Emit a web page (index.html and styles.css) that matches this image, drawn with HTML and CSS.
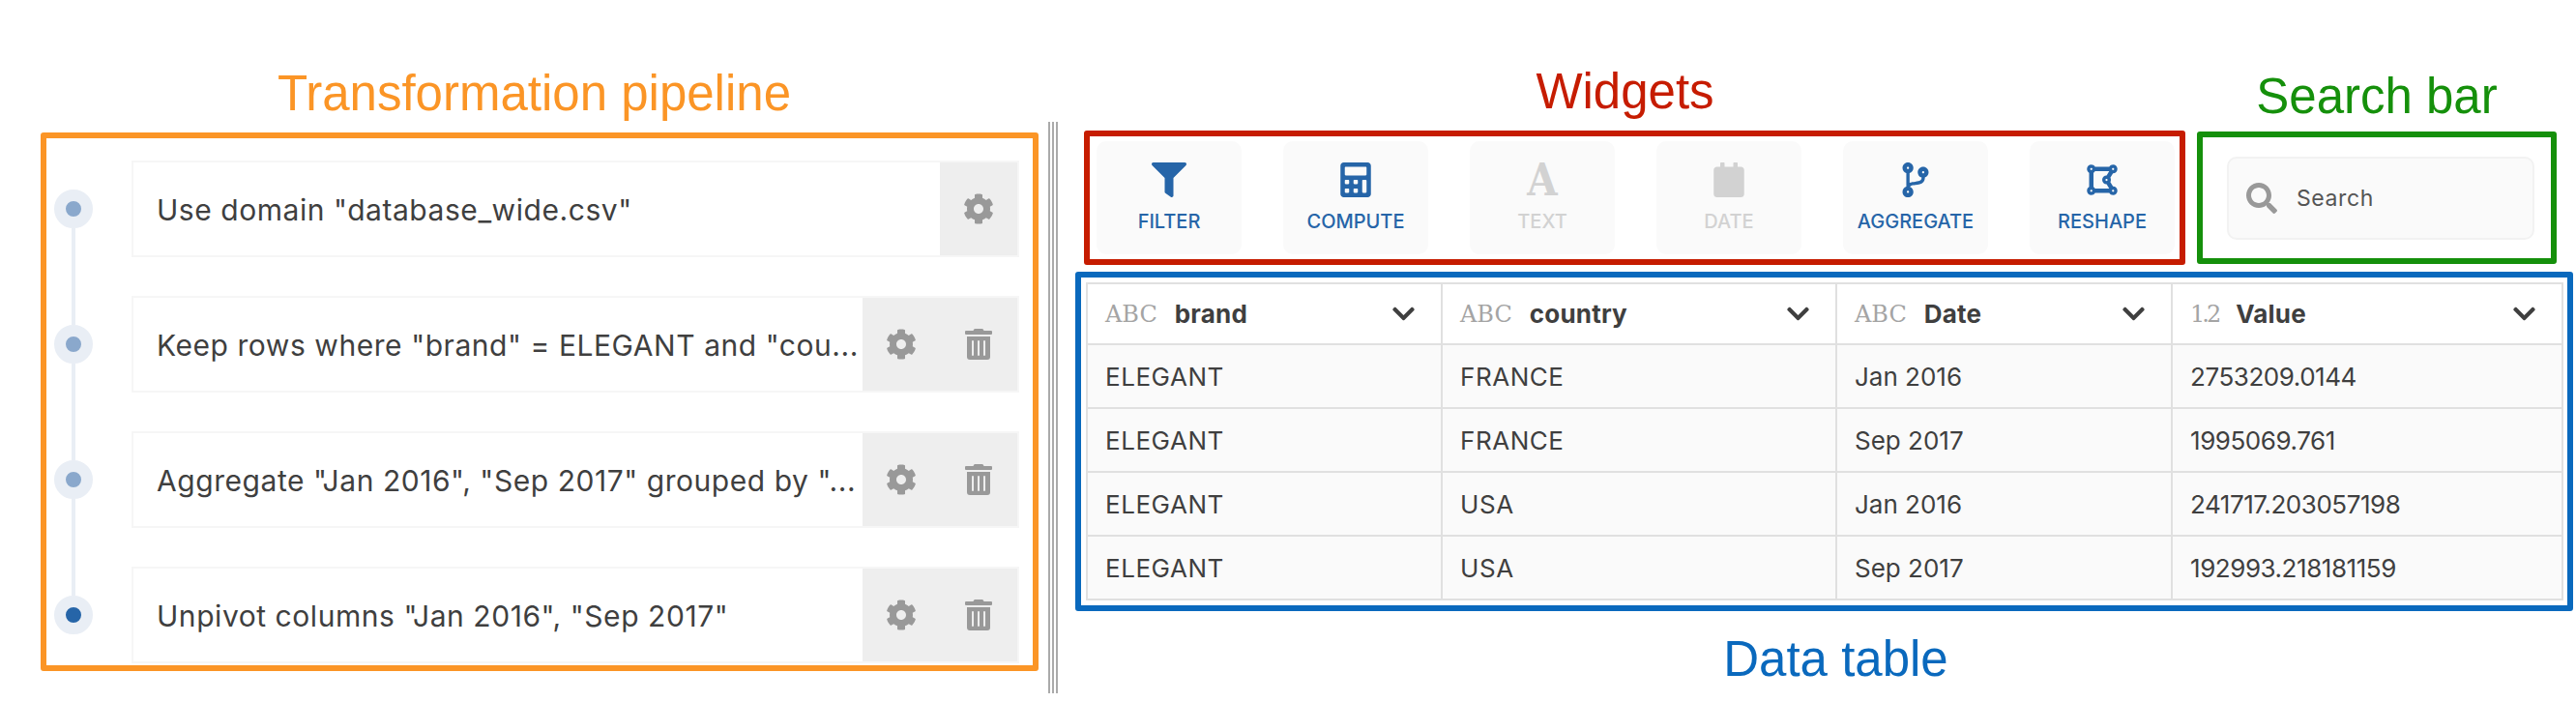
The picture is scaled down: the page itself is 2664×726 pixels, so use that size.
FILE: index.html
```html
<!DOCTYPE html>
<html lang="en">
<head>
    <meta charset="UTF-8">
    <title>Transformation pipeline, widgets and data table</title>
    <link rel="stylesheet" href="styles.css">
</head>
<body>
    <!-- icon sprite -->
    <svg class="sprite" xmlns="http://www.w3.org/2000/svg">
        <symbol id="i-cog" viewBox="0 0 512 512"><path d="M487.4 315.7l-42.6-24.6c4.3-23.2 4.3-47 0-70.2l42.6-24.6c4.9-2.8 7.1-8.6 5.5-14-11.1-35.6-30-67.8-54.7-94.6-3.8-4.1-10-5.1-14.8-2.3L380.8 110c-17.9-15.4-38.5-27.3-60.8-35.1V25.8c0-5.6-3.9-10.5-9.4-11.7-36.7-8.2-74.3-7.8-109.2 0-5.5 1.2-9.4 6.1-9.4 11.7V75c-22.2 7.9-42.8 19.8-60.8 35.1L88.7 85.5c-4.9-2.8-11-1.9-14.8 2.3-24.7 26.7-43.6 58.9-54.7 94.6-1.7 5.4.6 11.2 5.5 14L67.3 221c-4.3 23.2-4.3 47 0 70.2l-42.6 24.6c-4.9 2.8-7.1 8.6-5.5 14 11.1 35.6 30 67.8 54.7 94.6 3.8 4.1 10 5.1 14.8 2.3l42.6-24.6c17.9 15.4 38.5 27.3 60.8 35.1v49.2c0 5.6 3.9 10.5 9.4 11.7 36.7 8.2 74.3 7.8 109.2 0 5.5-1.2 9.4-6.1 9.4-11.7v-49.2c22.2-7.9 42.8-19.8 60.8-35.1l42.6 24.6c4.9 2.8 11 1.9 14.8-2.3 24.7-26.7 43.6-58.9 54.7-94.6 1.5-5.5-.7-11.3-5.6-14.1zM256 336c-44.1 0-80-35.9-80-80s35.9-80 80-80 80 35.9 80 80-35.9 80-80 80z"/></symbol>
        <symbol id="i-trash" viewBox="0 0 448 512"><path d="M32 464a48 48 0 0 0 48 48h288a48 48 0 0 0 48-48V128H32zm272-256a16 16 0 0 1 32 0v224a16 16 0 0 1-32 0zm-96 0a16 16 0 0 1 32 0v224a16 16 0 0 1-32 0zm-96 0a16 16 0 0 1 32 0v224a16 16 0 0 1-32 0zM432 32H312l-9.4-18.7A24 24 0 0 0 281.1 0H166.8a23.72 23.72 0 0 0-21.4 13.3L136 32H16A16 16 0 0 0 0 48v32a16 16 0 0 0 16 16h416a16 16 0 0 0 16-16V48a16 16 0 0 0-16-16z"/></symbol>
        <symbol id="i-filter" viewBox="0 0 512 512"><path d="M487.976 0H24.028C2.71 0-8.047 25.866 7.058 40.971L192 225.941V432c0 7.831 3.821 15.17 10.237 19.662l80 55.98C298.02 518.69 320 507.493 320 487.98V225.941l184.947-184.97C520.021 25.896 509.338 0 487.976 0z"/></symbol>
        <symbol id="i-calc" viewBox="0 0 448 512"><path d="M400 0H48C22.4 0 0 22.4 0 48v416c0 25.6 22.4 48 48 48h352c25.6 0 48-22.4 48-48V48c0-25.6-22.4-48-48-48zM128 435.2c0 6.4-6.4 12.8-12.8 12.8H76.8c-6.4 0-12.8-6.4-12.8-12.8v-38.4c0-6.4 6.4-12.8 12.8-12.8h38.4c6.4 0 12.8 6.4 12.8 12.8v38.4zm0-128c0 6.4-6.4 12.8-12.8 12.8H76.8c-6.4 0-12.8-6.4-12.8-12.8v-38.4c0-6.4 6.4-12.8 12.8-12.8h38.4c6.4 0 12.8 6.4 12.8 12.8v38.4zm128 128c0 6.4-6.4 12.8-12.8 12.8h-38.4c-6.4 0-12.8-6.4-12.8-12.8v-38.4c0-6.4 6.4-12.8 12.8-12.8h38.4c6.4 0 12.8 6.4 12.8 12.8v38.4zm0-128c0 6.4-6.4 12.8-12.8 12.8h-38.4c-6.4 0-12.8-6.4-12.8-12.8v-38.4c0-6.4 6.4-12.8 12.8-12.8h38.4c6.4 0 12.8 6.4 12.8 12.8v38.4zm128 128c0 6.4-6.4 12.8-12.8 12.8h-38.4c-6.4 0-12.8-6.4-12.8-12.8V268.8c0-6.4 6.4-12.8 12.8-12.8h38.4c6.4 0 12.8 6.4 12.8 12.8v166.4zm0-256c0 6.4-6.4 12.8-12.8 12.8H76.8c-6.4 0-12.8-6.4-12.8-12.8V76.8C64 70.4 70.4 64 76.8 64h294.4c6.4 0 12.8 6.4 12.8 12.8v102.4z"/></symbol>
        <symbol id="i-date" viewBox="0 0 448 512"><path d="M96 12c0-6.600 5.400-12 12-12h40c6.600 0 12 5.400 12 12v52h128V12c0-6.600 5.400-12 12-12h40c6.600 0 12 5.400 12 12v52h48c26.500 0 48 21.500 48 48v352c0 26.500-21.500 48-48 48H48c-26.500 0-48-21.500-48-48V112c0-26.500 21.500-48 48-48h48z"/></symbol>
        <symbol id="i-branch" viewBox="0 0 384 512"><path d="M384 144c0-44.200-35.800-80-80-80s-80 35.800-80 80c0 36.400 24.300 67.100 57.500 76.800-.6 16.100-4.200 28.500-11 36.900-15.400 19.200-49.300 22.400-85.200 25.700-28.200 2.600-57.400 5.400-81.300 16.900v-144c32.500-10.200 56-40.500 56-76.300 0-44.200-35.800-80-80-80S0 35.800 0 80c0 35.800 23.500 66.100 56 76.300v199.300C23.500 365.900 0 396.200 0 432c0 44.200 35.800 80 80 80s80-35.800 80-80c0-34-21.200-63.100-51.200-74.600 3.100-5.200 7.800-9.800 14.900-13.400 16.200-8.200 40.400-10.400 66.100-12.800 42.200-3.900 90-8.400 118.200-43.400 14-17.400 21.100-39.800 21.600-67.900 31.600-10.800 54.400-40.700 54.400-75.900zM80 64c8.800 0 16 7.200 16 16s-7.200 16-16 16-16-7.200-16-16 7.200-16 16-16zm0 384c-8.800 0-16-7.200-16-16s7.200-16 16-16 16 7.200 16 16-7.200 16-16 16zm224-320c8.800 0 16 7.200 16 16s-7.200 16-16 16-16-7.200-16-16 7.200-16 16-16z"/></symbol>
        <symbol id="i-polygon" viewBox="0 0 448 512"><path d="M384 352c-.35 0-.67.1-1.020.1l-39.200-65.320c5.070-9.170 8.220-19.560 8.220-30.780s-3.140-21.610-8.220-30.780l39.200-65.320c.35.010.67.1 1.020.1 35.350 0 64-28.650 64-64s-28.650-64-64-64c-23.630 0-44.040 12.950-55.120 32H119.120C108.040 44.950 87.630 32 64 32 28.650 32 0 60.650 0 96c0 23.630 12.950 44.040 32 55.120v209.750C12.950 371.960 0 392.370 0 416c0 35.350 28.650 64 64 64 23.630 0 44.040-12.950 55.120-32h209.750c11.090 19.050 31.490 32 55.120 32 35.350 0 64-28.650 64-64 .01-35.350-28.640-64-63.990-64zm-288 8.880V151.120A63.825 63.825 0 0 0 119.120 128h208.360l-38.460 64.100c-.35-.01-.67-.1-1.020-.1-35.350 0-64 28.650-64 64s28.650 64 64 64c.35 0 .67-.09 1.020-.1l38.460 64.100H119.120a63.748 63.748 0 0 0-23.120-23.120zM272 256c0-8.820 7.180-16 16-16s16 7.180 16 16-7.180 16-16 16-16-7.180-16-16zM400 96c0 8.820-7.180 16-16 16s-16-7.180-16-16 7.180-16 16-16 16 7.180 16 16zM64 80c8.820 0 16 7.180 16 16s-7.180 16-16 16-16-7.180-16-16 7.180-16 16-16zM48 416c0-8.820 7.180-16 16-16s16 7.180 16 16-7.180 16-16 16-16-7.180-16-16zm336 16c-8.820 0-16-7.180-16-16s7.180-16 16-16 16 7.180 16 16-7.180 16-16 16z"/></symbol>
        <symbol id="i-search" viewBox="0 0 512 512"><path d="M505 442.700L405.300 343c-4.500-4.500-10.600-7-17-7H372c27.600-35.300 44-79.700 44-128C416 93.100 322.900 0 208 0S0 93.100 0 208s93.100 208 208 208c48.300 0 92.700-16.400 128-44v16.300c0 6.400 2.500 12.500 7 17l99.700 99.700c9.400 9.400 24.600 9.400 33.900 0l28.300-28.300c9.400-9.400 9.400-24.600.1-34zM208 336c-70.700 0-128-57.200-128-128 0-70.700 57.200-128 128-128 70.700 0 128 57.200 128 128 0 70.700-57.200 128-128 128z"/></symbol>
        <symbol id="i-chevron" viewBox="0 120 448 272"><path d="M207.029 381.476L12.686 187.132c-9.373-9.373-9.373-24.569 0-33.941l22.667-22.667c9.357-9.357 24.522-9.375 33.901-.04L224 284.505l154.745-154.021c9.379-9.335 24.544-9.317 33.901.04l22.667 22.667c9.373 9.373 9.373 24.569 0 33.941L240.971 381.476c-9.373 9.372-24.569 9.372-33.942 0z"/></symbol>
    </svg>

    <div class="page">
        <section class="left">
            <h2 class="note note-orange">Transformation pipeline</h2>
            <div class="pipeline">
                <div class="rail">
                    <span class="dot"></span><span class="link"></span>
                    <span class="dot"></span><span class="link"></span>
                    <span class="dot"></span><span class="link"></span>
                    <span class="dot dot-active"></span>
                </div>
                <div class="steps">
                    <div class="step">
                        <div class="step-name">Use domain "database_wide.csv"</div>
                        <button class="step-btn"><svg class="ico-cog"><use href="#i-cog"/></svg></button>
                    </div>
                    <div class="step">
                        <div class="step-name">Keep rows where "brand" = ELEGANT and "cou...</div>
                        <button class="step-btn"><svg class="ico-cog"><use href="#i-cog"/></svg></button>
                        <button class="step-btn"><svg class="ico-trash"><use href="#i-trash"/></svg></button>
                    </div>
                    <div class="step">
                        <div class="step-name">Aggregate "Jan 2016", "Sep 2017" grouped by "...</div>
                        <button class="step-btn"><svg class="ico-cog"><use href="#i-cog"/></svg></button>
                        <button class="step-btn"><svg class="ico-trash"><use href="#i-trash"/></svg></button>
                    </div>
                    <div class="step">
                        <div class="step-name">Unpivot columns "Jan 2016", "Sep 2017"</div>
                        <button class="step-btn"><svg class="ico-cog"><use href="#i-cog"/></svg></button>
                        <button class="step-btn"><svg class="ico-trash"><use href="#i-trash"/></svg></button>
                    </div>
                </div>
            </div>
        </section>

        <div class="divider"></div>

        <section class="right">
            <div class="top-row">
                <div class="top-widgets">
                    <h2 class="note note-red">Widgets</h2>
                    <div class="widgets">
                        <button class="widget"><svg class="widget-ico"><use href="#i-filter"/></svg>FILTER</button>
                        <button class="widget"><svg class="widget-ico"><use href="#i-calc"/></svg>COMPUTE</button>
                        <button class="widget widget-off"><span class="widget-letter">A</span>TEXT</button>
                        <button class="widget widget-off"><svg class="widget-ico"><use href="#i-date"/></svg>DATE</button>
                        <button class="widget"><svg class="widget-ico"><use href="#i-branch"/></svg>AGGREGATE</button>
                        <button class="widget"><svg class="widget-ico"><use href="#i-polygon"/></svg>RESHAPE</button>
                    </div>
                </div>
                <div class="top-search">
                    <h2 class="note note-green">Search bar</h2>
                    <div class="search-wrap">
                        <div class="search">
                            <svg class="search-ico"><use href="#i-search"/></svg>
                            <span>Search</span>
                        </div>
                    </div>
                </div>
            </div>

            <div class="table-wrap">
                <table>
                    <colgroup>
                        <col class="col-1"><col class="col-2"><col class="col-3"><col class="col-4">
                    </colgroup>
                    <tr>
                        <th><div class="head"><span class="type">ABC</span><span class="name">brand</span><svg class="chev"><use href="#i-chevron"/></svg></div></th>
                        <th><div class="head"><span class="type">ABC</span><span class="name">country</span><svg class="chev"><use href="#i-chevron"/></svg></div></th>
                        <th><div class="head"><span class="type">ABC</span><span class="name">Date</span><svg class="chev"><use href="#i-chevron"/></svg></div></th>
                        <th><div class="head"><span class="type type-num">1.2</span><span class="name">Value</span><svg class="chev"><use href="#i-chevron"/></svg></div></th>
                    </tr>
                    <tr><td>ELEGANT</td><td>FRANCE</td><td class="date">Jan 2016</td><td class="num">2753209.0144</td></tr>
                    <tr><td>ELEGANT</td><td>FRANCE</td><td class="date">Sep 2017</td><td class="num">1995069.761</td></tr>
                    <tr><td>ELEGANT</td><td>USA</td><td class="date">Jan 2016</td><td class="num">241717.203057198</td></tr>
                    <tr><td>ELEGANT</td><td>USA</td><td class="date">Sep 2017</td><td class="num">192993.218181159</td></tr>
                </table>
            </div>
            <h2 class="note note-blue">Data table</h2>
        </section>
    </div>
</body>
</html>
```

FILE: styles.css
```css
* {
    box-sizing: border-box;
}

body {
    margin: 0;
    background: #fff;
    color: #3f3f3f;
    font-family: "Inter", "Liberation Sans", sans-serif;
}

.sprite {
    display: none;
}

.page {
    display: flex;
    height: 726px;
    padding-left: 42px;
}

/* Annotation labels */
.note {
    margin: 0;
    font-family: "Liberation Sans", Arial, sans-serif;
    font-size: 51px;
    font-weight: normal;
    line-height: 60px;
    text-align: center;
}

.note-orange { color: #fb9526; }
.note-red { color: #c61c00; }
.note-green { color: #15900b; }
.note-blue { color: #0a69bd; }

/* Left side */
.left {
    width: 1032px;
    padding-top: 67px;
}

.left .note {
    height: 70px;
    padding-right: 11px;
}

.pipeline {
    display: flex;
    height: 557px;
    padding: 23px 14px 0 8px;
    border: 6px solid #fb9526;
    border-radius: 3px;
}

.rail {
    display: flex;
    flex-direction: column;
    align-items: center;
    width: 40px;
    margin-right: 40px;
    padding-top: 30px;
}

.dot {
    flex: none;
    width: 40px;
    height: 40px;
    border: 12px solid #e9eef5;
    border-radius: 50%;
    background: #8aa8cc;
}

.dot-active {
    background: #2665a8;
}

.link {
    flex: none;
    width: 4px;
    height: 100px;
    background: #e9eef5;
}

.steps {
    display: flex;
    flex-direction: column;
    gap: 40px;
    flex: 1;
    min-width: 0;
}

.step {
    display: flex;
    height: 100px;
    border: 2px solid #f6f6f6;
}

.step-name {
    flex: 1;
    min-width: 0;
    padding-left: 24px;
    font-size: 30px;
    letter-spacing: 0.55px;
    line-height: 98px;
    white-space: nowrap;
}

.step-btn {
    display: flex;
    align-items: center;
    justify-content: center;
    flex: none;
    width: 80px;
    padding: 0;
    border: 0;
    background: #eee;
    fill: #999;
}

.ico-cog {
    width: 32px;
    height: 32px;
}

.ico-trash {
    width: 28px;
    height: 32px;
}

/* Divider between the two panels, three thin rules */
.divider {
    flex: none;
    width: 10px;
    height: 591px;
    margin: 126px 0 0 10px;
    background: repeating-linear-gradient(90deg, #aaa 0, #aaa 2px, #fff 2px, #fff 4px);
}

/* Right side */
.right {
    flex: none;
    width: 1549px;
    margin-left: 18px;
    padding-top: 59px;
}

.top-row {
    display: flex;
    height: 215px;
    padding-left: 9px;
}

.top-widgets {
    flex: none;
    width: 1139px;
    margin-right: 12px;
}

.top-widgets .note {
    height: 76px;
    padding: 6px 20px 0 0;
}

.widgets {
    display: flex;
    justify-content: space-between;
    height: 139px;
    padding: 5px 5px 5px 7px;
    border: 6px solid #c61c00;
    border-radius: 3px;
}

.widget {
    display: flex;
    flex-direction: column;
    align-items: center;
    width: 150px;
    height: 117px;
    padding: 22px 0 0;
    border: 0;
    border-radius: 10px;
    background: #fafafa;
    color: #2665a8;
    fill: #2665a8;
    font-family: "Inter", sans-serif;
    font-size: 20px;
    font-weight: 500;
    line-height: 24px;
}

.widget-off {
    color: #d2d2d2;
    fill: #d2d2d2;
}

.widget-ico {
    width: 40px;
    height: 36px;
    margin-bottom: 13px;
}

.widget-letter {
    height: 36px;
    margin-bottom: 13px;
    font-family: "DejaVu Serif", serif;
    font-size: 46px;
    font-weight: bold;
    line-height: 36px;
    transform: scaleX(0.88);
}

.top-search {
    flex: none;
    width: 372px;
}

.top-search .note {
    height: 77px;
    padding-top: 11px;
}

.search-wrap {
    height: 137px;
    padding: 20px 17px 20px 25px;
    border: 6px solid #15900b;
    border-radius: 3px;
}

.search {
    display: flex;
    align-items: center;
    height: 86px;
    padding-left: 18px;
    border: 2px solid #f2f2f2;
    border-radius: 10px;
    background: #fafafa;
    color: #555;
    font-size: 23px;
    letter-spacing: 0.6px;
}

.search-ico {
    width: 32px;
    height: 32px;
    margin-right: 20px;
    fill: #999;
}

/* Data table */
.table-wrap {
    height: 351px;
    margin-top: 7px;
    padding: 5px 5px;
    border: 6px solid #0a69bd;
    border-radius: 3px;
}

table {
    width: 1526px;
    border-collapse: collapse;
    table-layout: fixed;
    font-size: 26px;
    letter-spacing: 0.55px;
}

.col-1 { width: 367px; }
.col-2 { width: 408px; }
.col-3 { width: 347px; }
.col-4 { width: 404px; }

th, td {
    height: 66px;
    padding: 0 27px 0 18px;
    border: 2px solid #e0e0e0;
    font-weight: normal;
    text-align: left;
}

th {
    height: 63px;
}

td {
    background: #fafafa;
}

td.date {
    letter-spacing: 0;
}

td.num {
    letter-spacing: -0.45px;
}

.head {
    display: flex;
    align-items: center;
}

.type {
    margin-right: 18px;
    color: #a4a4a4;
    font-family: "DejaVu Serif", serif;
    font-size: 24px;
    letter-spacing: 0;
}

.type-num {
    letter-spacing: -3px;
}

.name {
    flex: 1;
    font-weight: bold;
    letter-spacing: 0.2px;
}

.chev {
    flex: none;
    width: 23px;
    height: 15px;
    fill: #3f3f3f;
}

.right > .note {
    margin-top: 20px;
    padding-left: 24px;
}
```
